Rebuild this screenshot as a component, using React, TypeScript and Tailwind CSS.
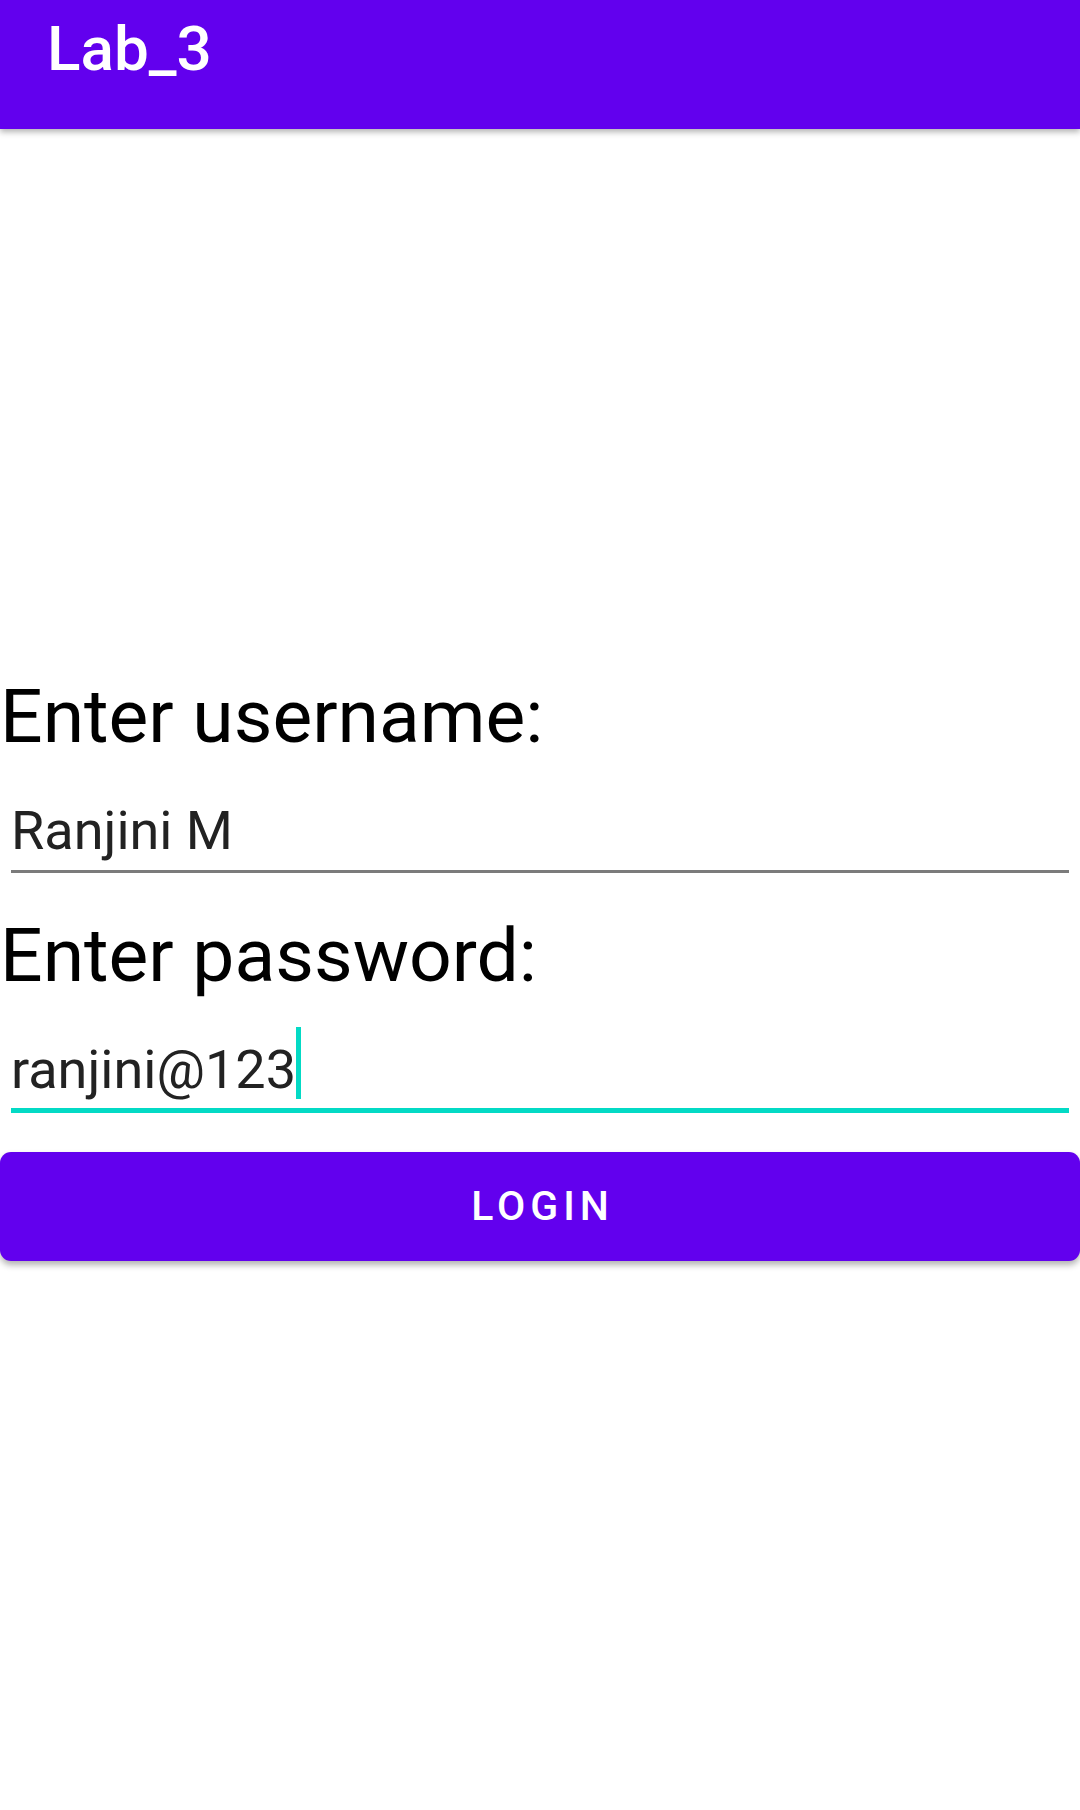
const roboto = { fontFamily: "Roboto, 'Liberation Sans', sans-serif" };

const Field = ({ value, focused }: { value: string; focused?: boolean }) => (
  <div
    className={`mx-[11px] pt-[50px] ${
      focused ? "pb-[11px] border-b-[5px] border-[#03DAC5]" : "pb-[12px] border-b-[3px] border-[#7b7b7b]"
    }`}
  >
    <div className="flex items-end h-[54px]">
      <span className="text-[54px] leading-none text-[#222222]">{value}</span>
      {focused && <span className="ml-0 w-[5px] h-[72px] -mt-[20px] -mb-[2px] bg-[#03DAC5]" />}
    </div>
  </div>
);

export default function App() {
  return (
    <div className="min-h-screen w-full bg-white" style={roboto}>
      {/* toolbar */}
      <header className="h-[129px] bg-[#6200EE] pl-[47px] pt-[18px] shadow-[0_3px_6px_rgba(0,0,0,0.3)] relative z-10">
        <h1 className="text-[62px] leading-none font-medium text-white">Lab_3</h1>
      </header>

      <main className="flex flex-col pt-[550px]">
        <label className="text-[75px] leading-none text-black">Enter username:</label>
        <Field value="Ranjini M" />

        <label className="mt-[45px] text-[75px] leading-none text-black">Enter password:</label>
        <Field value="ranjini@123" focused />

        <button className="mt-[39px] h-[109px] w-full rounded-[11px] bg-[#6200EE] flex items-center justify-center pl-[5px] shadow-[0_4px_6px_rgba(0,0,0,0.3)]">
          <span className="text-[41px] leading-none font-medium tracking-[5px] text-white">LOGIN</span>
        </button>
      </main>
    </div>
  );
}
